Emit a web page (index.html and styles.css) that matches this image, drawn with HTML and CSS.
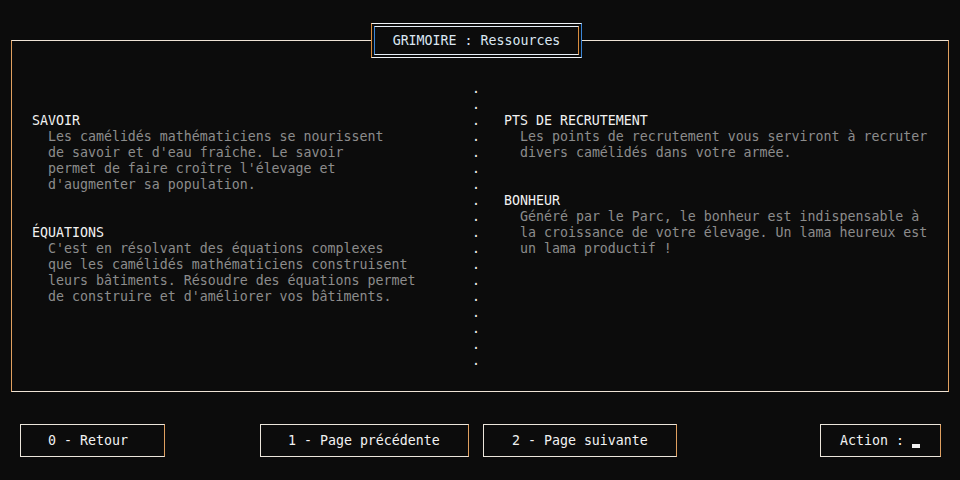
FILE: index.html
```html
<!DOCTYPE html>
<html lang="fr">
<head>
<meta charset="utf-8">
<title>GRIMOIRE : Ressources</title>
<link rel="stylesheet" href="styles.css">
</head>
<body>
<main class="panel">
  <div class="title"><div class="title-inner">GRIMOIRE : Ressources</div></div>
  <div class="columns">
    <section class="col col-left">
      <div class="entry">
        <div class="head">SAVOIR</div>
        <div class="body">
          <div>Les camélidés mathématiciens se nourissent</div>
          <div>de savoir et d'eau fraîche. Le savoir</div>
          <div>permet de faire croître l'élevage et</div>
          <div>d'augmenter sa population.</div>
        </div>
      </div>
      <div class="entry">
        <div class="head">ÉQUATIONS</div>
        <div class="body">
          <div>C'est en résolvant des équations complexes</div>
          <div>que les camélidés mathématiciens construisent</div>
          <div>leurs bâtiments. Résoudre des équations permet</div>
          <div>de construire et d'améliorer vos bâtiments.</div>
        </div>
      </div>
    </section>
    <div class="divider">
      <span>.</span><span>.</span><span>.</span><span>.</span><span>.</span><span>.</span>
      <span>.</span><span>.</span><span>.</span><span>.</span><span>.</span><span>.</span>
      <span>.</span><span>.</span><span>.</span><span>.</span><span>.</span><span>.</span>
    </div>
    <section class="col col-right">
      <div class="entry">
        <div class="head">PTS DE RECRUTEMENT</div>
        <div class="body">
          <div>Les points de recrutement vous serviront à recruter</div>
          <div>divers camélidés dans votre armée.</div>
        </div>
      </div>
      <div class="entry">
        <div class="head">BONHEUR</div>
        <div class="body">
          <div>Généré par le Parc, le bonheur est indispensable à</div>
          <div>la croissance de votre élevage. Un lama heureux est</div>
          <div>un lama productif !</div>
        </div>
      </div>
    </section>
  </div>
</main>
<nav class="actions">
  <div class="btn btn-back">0 - Retour</div>
  <div class="btn btn-prev">1 - Page précédente</div>
  <div class="btn btn-next">2 - Page suivante</div>
  <div class="btn btn-action">Action : <span class="cursor"></span></div>
</nav>
</body>
</html>
```
FILE: styles.css
```css
html, body {
  margin: 0;
  padding: 0;
  background: #0c0c0c;
}

body {
  width: 960px;
  height: 480px;
  overflow: hidden;
  font-family: "DejaVu Sans Mono", "Liberation Mono", monospace;
  font-size: 13.288px;
  line-height: 16px;
  color: #f0f0f0;
}

.panel {
  position: relative;
  margin: 40px 11px 0;
  height: 288px;
  padding: 40px 0 22px 20px;
  border: 1px solid #efe4d6;
  border-left-color: #e0a060;
  border-right-color: #e0a060;
}

.title {
  position: absolute;
  top: -18px;
  left: 359px;
  width: 205px;
  height: 29px;
  padding: 2px;
  background: #0c0c0c;
  border: 1px solid #eef2f6;
  border-left-color: #d88c3e;
  border-right-color: #3b86d6;
}

.title-inner {
  height: 27px;
  line-height: 27px;
  border: 1px solid #e6eef6;
  border-left-color: #3b86d6;
  border-right-color: #d88c3e;
  text-align: center;
  color: #dbe7f2;
}

.columns {
  display: flex;
  height: 288px;
}

.col {
  padding-top: 32px;
  display: flex;
  flex-direction: column;
  gap: 32px;
}

.col-left {
  width: 440px;
}

.col-right {
  padding-left: 24px;
}

.head {
  color: #f2f2f2;
  white-space: nowrap;
}

.body {
  padding-left: 16px;
  color: #8c8c8c;
  white-space: nowrap;
}

.divider {
  width: 8px;
  display: flex;
  flex-direction: column;
  color: #f0f0f0;
  text-align: center;
}

.divider span {
  height: 16px;
}

.actions {
  display: flex;
  margin-top: 32px;
  padding-left: 20px;
}

.btn {
  box-sizing: border-box;
  height: 33px;
  line-height: 31px;
  border: 1px solid #ece6dc;
  border-right-color: #e0a060;
  color: #f2f2f2;
  white-space: pre;
}

.btn-back {
  width: 145px;
  padding-left: 27px;
}

.btn-prev {
  width: 209px;
  margin-left: 95px;
  padding-left: 27px;
}

.btn-next {
  width: 194px;
  margin-left: 14px;
  padding-left: 28px;
}

.btn-action {
  width: 121px;
  margin-left: 143px;
  padding-left: 19px;
}

.cursor {
  display: inline-block;
  width: 8px;
  height: 4px;
  background: #f0f0f0;
  vertical-align: -3px;
}
```
